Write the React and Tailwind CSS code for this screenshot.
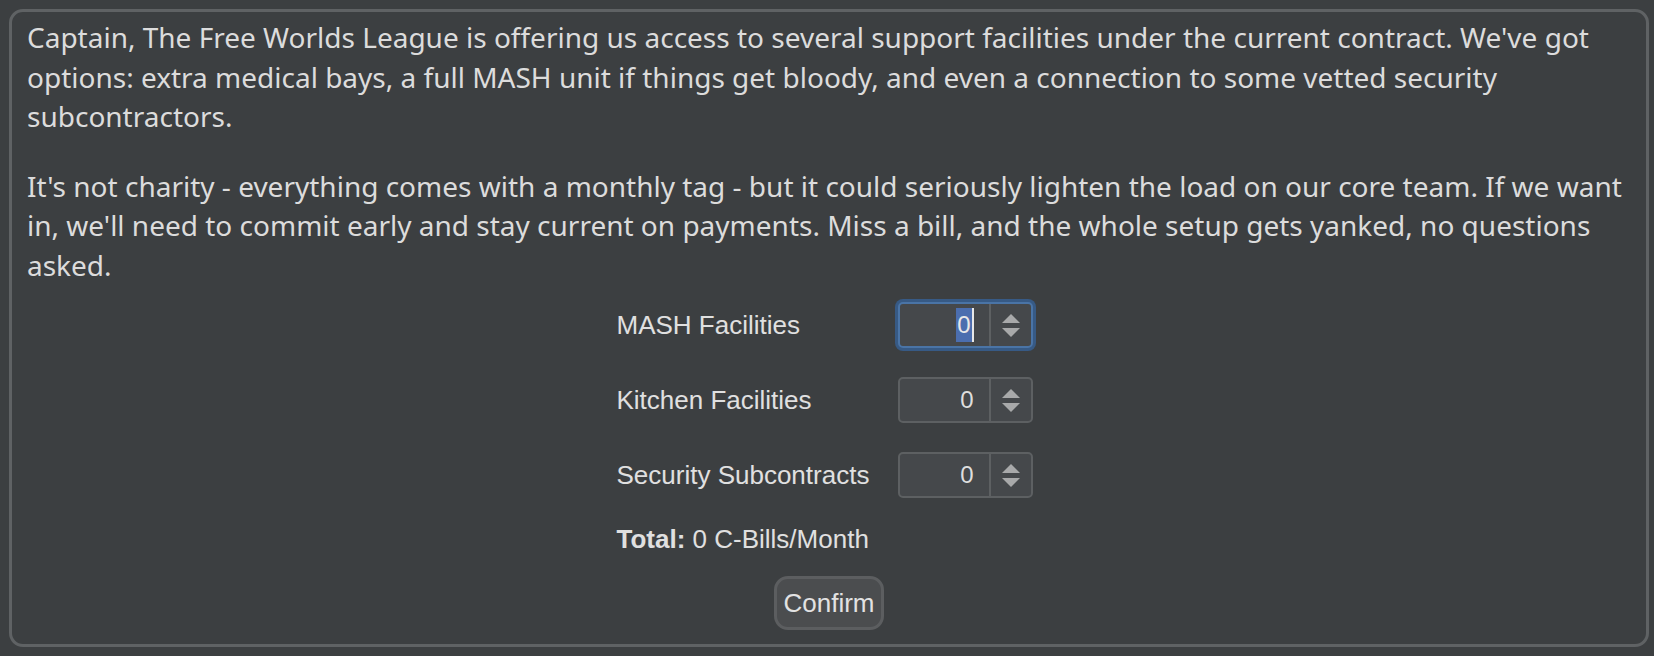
import React from 'react';

function Spinner({ focused }) {
  return (
    <div
      className={`flex w-[135px] h-[46px] rounded-[5px] bg-[#45484b] border-2 ${
        focused
          ? 'border-[#4a74a6] shadow-[0_0_0_3px_#375a85]'
          : 'border-[#5d6062]'
      }`}
    >
      {/* VALUE */}
      <div className="flex-1 flex items-center justify-end pr-[15px] text-[24px] text-[#dedede]">
        {focused ? (
          <span className="flex items-center">
            <span className="bg-[#4b6eaf] text-[#e8e8e8] h-[34px] leading-[34px] px-[1px]">0</span>
            <span className="w-[2px] h-[34px] bg-[#e8e8e8]"></span>
          </span>
        ) : (
          <span>0</span>
        )}
      </div>

      {/* ARROWS */}
      <div className="w-[42px] border-l-2 border-[#5d6062] flex flex-col items-center justify-center gap-[5px]">
        <svg width="18" height="9" viewBox="0 0 18 9">
          <polygon points="9,0 18,9 0,9" fill="#a8a9aa" />
        </svg>
        <svg width="18" height="9" viewBox="0 0 18 9">
          <polygon points="0,0 18,0 9,9" fill="#a8a9aa" />
        </svg>
      </div>
    </div>
  );
}

function Row({ label, focused, first }) {
  return (
    <div className={`flex items-center h-[46px] ${first ? '' : 'mt-[29px]'}`}>
      <div className="w-[281px] text-[26px] text-[#e0e0e0]">{label}</div>
      <Spinner focused={focused} />
    </div>
  );
}

export default function App() {
  return (
    <div className="w-[1654px] h-[656px] bg-[#3c3f41] pl-[9px] pr-[5px] pt-[9px] pb-[9px]">
      <div className="h-full border-[3px] border-[#5f6264] rounded-[14px] px-[15px] pt-[6px] flex flex-col">

        {/* ===== MESSAGE ===== */}
        <div className="font-['Noto_Sans',sans-serif] text-[28px] leading-[39.5px] text-[#dcdcdc]">
          <p>
            Captain, The Free Worlds League is offering us access to several support facilities under the
            current contract. We've got options: extra medical bays, a full MASH unit if things get bloody,
            and even a connection to some vetted security subcontractors.
          </p>
          <p className="mt-[30px]">
            It's not charity - everything comes with a monthly tag - but it could seriously lighten the load on
            our core team. If we want in, we'll need to commit early and stay current on payments. Miss a bill,
            and the whole setup gets yanked, no questions asked.
          </p>
        </div>

        {/* ===== FORM ===== */}
        <div className="font-['Liberation_Sans',Arial,sans-serif] mt-[17px] flex flex-col items-center">
          <div className="w-[416px] mr-[9px]">
            <Row label="MASH Facilities" focused first />
            <Row label="Kitchen Facilities" />
            <Row label="Security Subcontracts" />
            <div className="mt-[26px] h-[30px] leading-[30px] text-[26px] text-[#e0e0e0]">
              <span className="font-bold">Total:</span> 0 C-Bills/Month
            </div>
          </div>

          <button className="mt-[22px] w-[110px] h-[54px] rounded-[14px] border-[3px] border-[#5c5e60] bg-[#4b4d4f] text-[26px] text-[#e2e2e2]">
            Confirm
          </button>
        </div>
      </div>
    </div>
  );
}
